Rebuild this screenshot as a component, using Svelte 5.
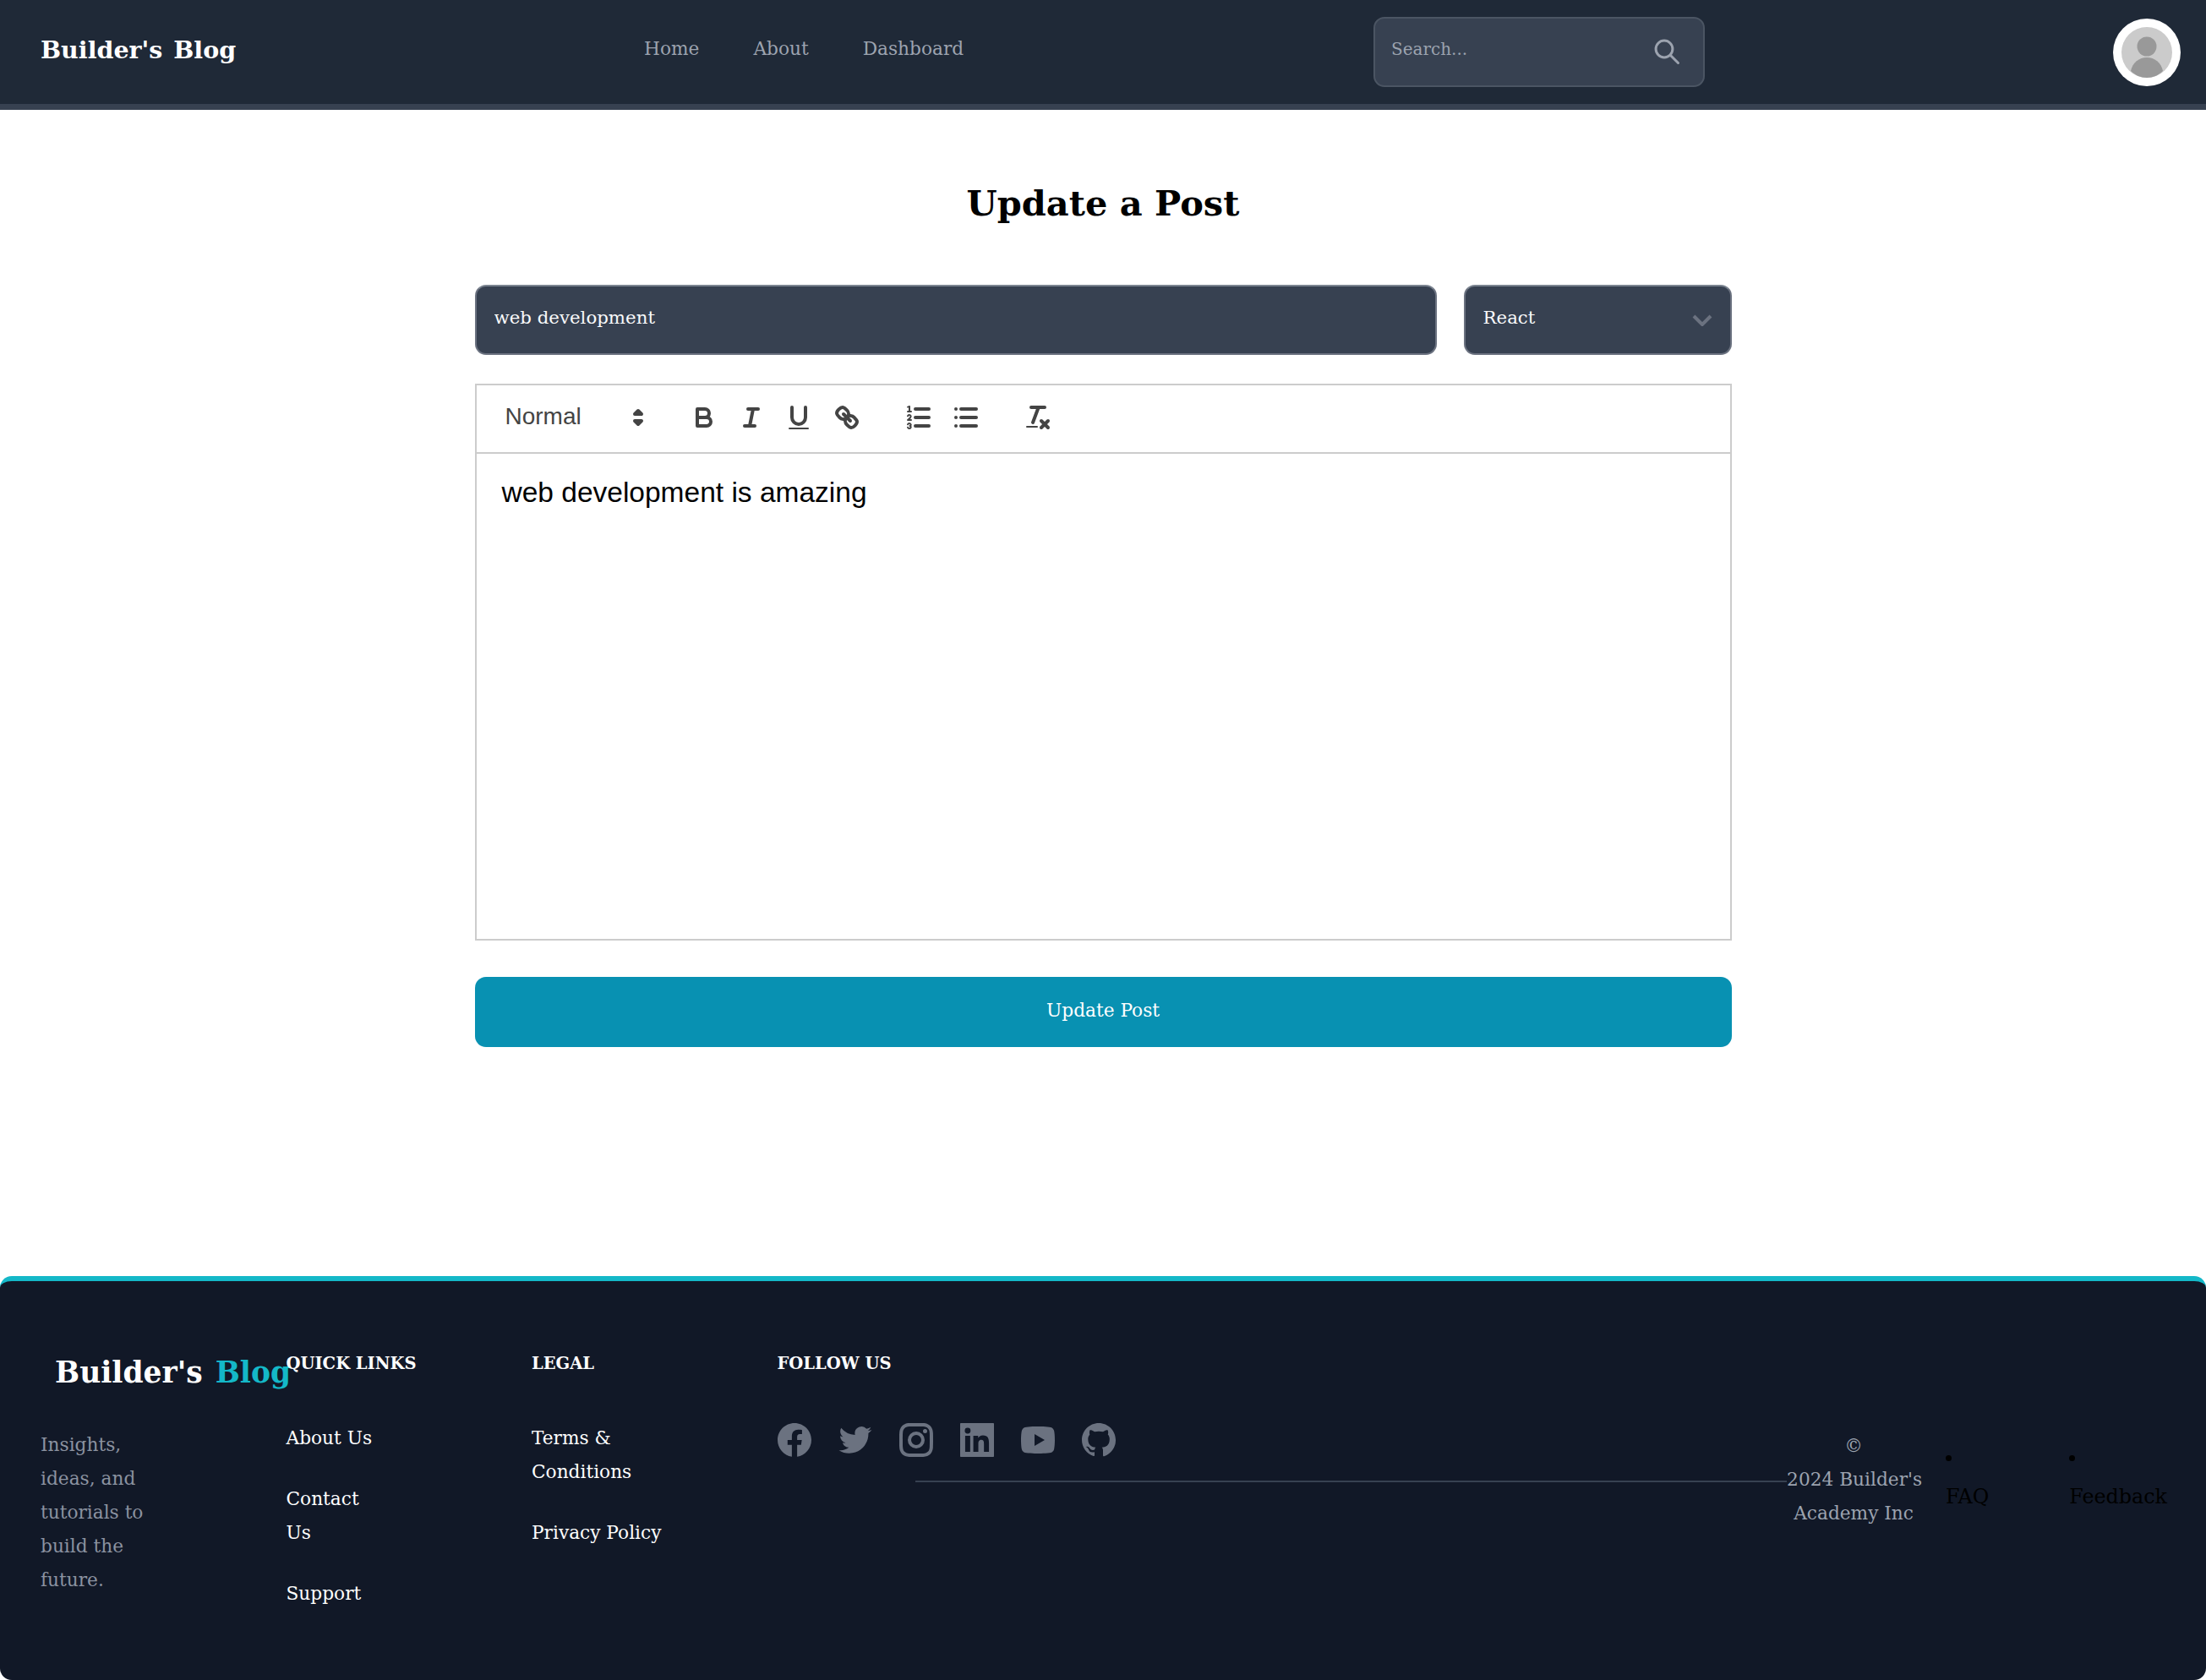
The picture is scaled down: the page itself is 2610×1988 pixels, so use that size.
<script>
  const quick = ['About Us', 'Contact<br>Us', 'Support'];
  const legal = ['Terms &amp;<br>Conditions', 'Privacy Policy'];
</script>

<header class="navbar">
  <a class="logo" href="/">Builder's Blog</a>
  <nav class="links">
    <a href="/">Home</a>
    <a href="/about">About</a>
    <a href="/dashboard">Dashboard</a>
  </nav>
  <div class="search">
    <input type="text" placeholder="Search..." />
    <svg viewBox="0 0 24 24" width="36" height="36" fill="none" stroke="#9ca3af" stroke-width="2" stroke-linecap="round">
      <circle cx="10" cy="10" r="6.6" />
      <line x1="15" y1="15" x2="21" y2="21" />
    </svg>
  </div>
  <div class="avatar">
    <svg viewBox="0 0 60 60" width="60" height="60">
      <circle cx="30" cy="30" r="30" fill="#cbcbcb" />
      <circle cx="30" cy="23" r="11.5" fill="#999" />
      <path d="M11 52c2-10 10-16 19-16s17 6 19 16c-5 5-12 8-19 8s-14-3-19-8z" fill="#999" />
    </svg>
  </div>
</header>

<main>
  <h1>Update a Post</h1>
  <form on:submit|preventDefault>
    <div class="top-row">
      <input class="title-input" type="text" value="web development" />
      <div class="select-wrap">
        <select>
          <option>React</option>
        </select>
        <svg class="chev" viewBox="0 0 24 14" width="24" height="14" fill="none" stroke="#6b7280" stroke-width="4">
          <path d="M2 2l10 10 10-10" />
        </svg>
      </div>
    </div>

    <div class="editor">
      <div class="toolbar">
        <span class="picker">
          <span class="picker-label">Normal</span>
          <svg viewBox="0 0 18 18" class="ic"><polygon class="f s" points="7 11 9 13 11 11 7 11" /><polygon class="f s" points="7 7 9 5 11 7 7 7" /></svg>
        </span>
        <span class="formats">
          <button type="button"><svg viewBox="0 0 18 18" class="ic"><path class="s" d="M5,4H9.5A2.5,2.5,0,0,1,12,6.5v0A2.5,2.5,0,0,1,9.5,9H5A0,0,0,0,1,5,9V4A0,0,0,0,1,5,4Z" /><path class="s" d="M5,9h5.5A2.5,2.5,0,0,1,13,11.5v0A2.5,2.5,0,0,1,10.5,14H5a0,0,0,0,1,0,0V9A0,0,0,0,1,5,9Z" /></svg></button>
          <button type="button"><svg viewBox="0 0 18 18" class="ic"><line class="s" x1="7" x2="13" y1="4" y2="4" /><line class="s" x1="5" x2="11" y1="14" y2="14" /><line class="s" x1="8" x2="10" y1="14" y2="4" /></svg></button>
          <button type="button"><svg viewBox="0 0 18 18" class="ic"><path class="s" d="M5,3V9a4.012,4.012,0,0,0,4,4H9a4.012,4.012,0,0,0,4-4V3" /><rect class="f" height="1" rx="0.5" ry="0.5" width="12" x="3" y="15" /></svg></button>
          <button type="button"><svg viewBox="0 0 18 18" class="ic"><line class="s" x1="7" x2="11" y1="7" y2="11" /><path class="s" d="M8.9,4.577a3.476,3.476,0,0,1,.36,4.679A3.476,3.476,0,0,1,4.577,8.9C3.185,7.5,2.035,6.4,4.217,4.217S7.5,3.185,8.9,4.577Z" /><path class="s" d="M13.423,9.1a3.476,3.476,0,0,0-4.679-.36,3.476,3.476,0,0,0,.36,4.679c1.392,1.392,2.5,2.542,4.679.36S14.815,10.5,13.423,9.1Z" /></svg></button>
        </span>
        <span class="formats">
          <button type="button"><svg viewBox="0 0 18 18" class="ic"><line class="s" x1="7" x2="15" y1="4" y2="4" /><line class="s" x1="7" x2="15" y1="9" y2="9" /><line class="s" x1="7" x2="15" y1="14" y2="14" /><line class="s thin" x1="2.5" x2="4.5" y1="5.5" y2="5.5" /><path class="f" d="M3.5,6A0.5,0.5,0,0,1,3,5.5V3.085l-0.276.138A0.5,0.5,0,0,1,2.053,3c-0.124-.247-0.023-0.324.224-0.447l1-.5A0.5,0.5,0,0,1,4,2.5v3A0.5,0.5,0,0,1,3.5,6Z" /><path class="s thin" d="M4.5,10.5h-2c0-.234,1.85-1.076,1.85-2.234A0.959,0.959,0,0,0,2.5,8.156" /><path class="s thin" d="M2.5,14.846a0.959,0.959,0,0,0,1.85-.109A0.7,0.7,0,0,0,3.75,14a0.688,0.688,0,0,0,.6-0.736,0.959,0.959,0,0,0-1.85-.109" /></svg></button>
          <button type="button"><svg viewBox="0 0 18 18" class="ic"><line class="s" x1="6" x2="15" y1="4" y2="4" /><line class="s" x1="6" x2="15" y1="9" y2="9" /><line class="s" x1="6" x2="15" y1="14" y2="14" /><line class="s" x1="3" x2="3" y1="4" y2="4" /><line class="s" x1="3" x2="3" y1="9" y2="9" /><line class="s" x1="3" x2="3" y1="14" y2="14" /></svg></button>
        </span>
        <span class="formats">
          <button type="button"><svg viewBox="0 0 18 18" class="ic"><line class="s" x1="5" x2="13" y1="3" y2="3" /><line class="s" x1="6" x2="9.35" y1="12" y2="3" /><line class="s" x1="11" x2="15" y1="11" y2="15" /><line class="s" x1="15" x2="11" y1="11" y2="15" /><rect class="f" height="1" rx="0.5" ry="0.5" width="7" x="2" y="14" /></svg></button>
        </span>
      </div>
      <div class="content"><p>web development is amazing</p></div>
    </div>

    <button class="submit" type="submit">Update Post</button>
  </form>
</main>

<footer>
  <div class="col brand">
    <div class="brand-name">Builder's <span>Blog</span></div>
    <p>Insights,<br>ideas, and<br>tutorials to<br>build the<br>future.</p>
  </div>
  <div class="col">
    <h4>Quick Links</h4>
    <ul>
      {#each quick as item}
        <li><a href="/">{@html item}</a></li>
      {/each}
    </ul>
  </div>
  <div class="col">
    <h4>Legal</h4>
    <ul>
      {#each legal as item}
        <li><a href="/">{@html item}</a></li>
      {/each}
    </ul>
  </div>
  <div class="col follow">
    <h4>Follow Us</h4>
    <div class="socials">
      <svg viewBox="2 2 20 20"><path d="M12 2C6.477 2 2 6.477 2 12c0 4.991 3.657 9.128 8.438 9.878v-6.987h-2.54V12h2.54V9.797c0-2.506 1.492-3.89 3.777-3.89 1.094 0 2.238.195 2.238.195v2.46h-1.26c-1.243 0-1.63.771-1.63 1.562V12h2.773l-.443 2.89h-2.33v6.988C18.343 21.128 22 16.991 22 12c0-5.523-4.477-10-10-10z" /></svg>
      <svg viewBox="1.5 1.5 21 21"><path d="M22.162 5.656a8.384 8.384 0 0 1-2.402.658A4.196 4.196 0 0 0 21.6 4c-.82.488-1.719.83-2.656 1.015a4.182 4.182 0 0 0-7.126 3.814 11.874 11.874 0 0 1-8.62-4.37 4.168 4.168 0 0 0-.566 2.103c0 1.45.738 2.731 1.86 3.481a4.168 4.168 0 0 1-1.894-.523v.052a4.185 4.185 0 0 0 3.355 4.101 4.21 4.21 0 0 1-1.89.072A4.185 4.185 0 0 0 7.97 16.65a8.394 8.394 0 0 1-6.191 1.732 11.83 11.83 0 0 0 6.41 1.88c7.693 0 11.9-6.373 11.9-11.9 0-.18-.005-.362-.013-.54a8.496 8.496 0 0 0 2.087-2.165z" /></svg>
      <svg viewBox="2 2 20 20"><path d="M12 9a3 3 0 1 0 0 6 3 3 0 0 0 0-6zm0-2a5 5 0 1 1 0 10 5 5 0 0 1 0-10zm6.5-.25a1.25 1.25 0 0 1-2.5 0 1.25 1.25 0 0 1 2.5 0zM12 4c-2.474 0-2.878.007-4.029.058-.784.037-1.31.142-1.798.332-.434.168-.747.369-1.08.703a2.89 2.89 0 0 0-.704 1.08c-.19.49-.295 1.015-.331 1.798C4.006 9.075 4 9.461 4 12c0 2.474.007 2.878.058 4.029.037.783.142 1.31.331 1.797.17.435.37.748.702 1.08.337.336.65.537 1.08.703.494.191 1.02.297 1.8.333C9.075 19.994 9.461 20 12 20c2.474 0 2.878-.007 4.029-.058.782-.037 1.309-.142 1.797-.331.433-.169.748-.37 1.08-.702.337-.337.538-.65.704-1.08.19-.493.296-1.02.332-1.8.052-1.104.058-1.49.058-4.029 0-2.474-.007-2.878-.058-4.029-.037-.782-.142-1.31-.332-1.798a2.911 2.911 0 0 0-.703-1.08 2.884 2.884 0 0 0-1.08-.704c-.49-.19-1.016-.295-1.798-.331C14.925 4.006 14.539 4 12 4zm0-2c2.717 0 3.056.01 4.122.06 1.065.05 1.79.217 2.428.465.66.254 1.216.598 1.772 1.153a4.908 4.908 0 0 1 1.153 1.772c.247.637.415 1.363.465 2.428.047 1.066.06 1.405.06 4.122 0 2.717-.01 3.056-.06 4.122-.05 1.065-.218 1.79-.465 2.428a4.883 4.883 0 0 1-1.153 1.772 4.915 4.915 0 0 1-1.772 1.153c-.637.247-1.363.415-2.428.465-1.066.047-1.405.06-4.122.06-2.717 0-3.056-.01-4.122-.06-1.065-.05-1.79-.218-2.428-.465a4.89 4.89 0 0 1-1.772-1.153 4.904 4.904 0 0 1-1.153-1.772c-.248-.637-.415-1.363-.465-2.428C2.013 15.056 2 14.717 2 12c0-2.717.01-3.056.06-4.122.05-1.066.217-1.79.465-2.428a4.88 4.88 0 0 1 1.153-1.772A4.897 4.897 0 0 1 5.45 2.525c.638-.248 1.362-.415 2.428-.465C8.944 2.013 9.283 2 12 2z" /></svg>
      <svg viewBox="3 3 18 18"><path d="M18.335 18.339H15.67v-4.177c0-.996-.02-2.278-1.39-2.278-1.389 0-1.601 1.084-1.601 2.205v4.25h-2.666V9.75h2.56v1.17h.035c.358-.674 1.228-1.387 2.528-1.387 2.7 0 3.2 1.778 3.2 4.091v4.715zM7.003 8.575a1.546 1.546 0 0 1-1.548-1.549 1.548 1.548 0 1 1 1.547 1.549zm1.336 9.764H5.666V9.75H8.34v8.589zM20.67 3H3.33C3.15 3 3 3.15 3 3.3v17.4c0 .15.15.3.33.3h17.34c.18 0 .33-.15.33-.3V3.3c0-.15-.15-.3-.33-.3z" /></svg>
      <svg viewBox="2 2 20 20"><path d="M21.543 6.498C22 8.28 22 12 22 12s0 3.72-.457 5.502c-.254.985-.997 1.76-1.938 2.022C17.896 20 12 20 12 20s-5.893 0-7.605-.476c-.945-.266-1.687-1.04-1.938-2.022C2 15.72 2 12 2 12s0-3.72.457-5.502c.254-.985.997-1.76 1.938-2.022C6.107 4 12 4 12 4s5.896 0 7.605.476c.945.266 1.687 1.04 1.938 2.022zM10 15.5l6-3.5-6-3.5v7z" /></svg>
      <svg viewBox="2 2 20 20"><path d="M12 2C6.475 2 2 6.475 2 12a9.994 9.994 0 0 0 6.838 9.488c.5.087.687-.213.687-.476 0-.237-.013-1.024-.013-1.862-2.512.463-3.162-.612-3.362-1.175-.113-.288-.6-1.175-1.025-1.413-.35-.187-.85-.65-.013-.662.788-.013 1.35.725 1.538 1.025.9 1.512 2.338 1.087 2.912.825.088-.65.35-1.087.638-1.337-2.225-.25-4.55-1.113-4.55-4.938 0-1.088.387-1.987 1.025-2.688-.1-.25-.45-1.275.1-2.65 0 0 .837-.262 2.75 1.026a9.28 9.28 0 0 1 2.5-.338c.85 0 1.7.112 2.5.337 1.912-1.3 2.75-1.024 2.75-1.024.55 1.375.2 2.4.1 2.65.637.7 1.025 1.587 1.025 2.687 0 3.838-2.337 4.688-4.562 4.938.362.312.675.912.675 1.85 0 1.337-.013 2.412-.013 2.837 0 .263.188.575.688.475A10.005 10.005 0 0 0 22 12c0-5.525-4.475-10-10-10z" /></svg>
    </div>
  </div>
  <div class="bottom">
    <div class="rule"></div>
    <p class="copy">©<br>2024 Builder's<br>Academy Inc</p>
    <ul class="extra">
      <li><a href="/">FAQ</a></li>
      <li><a href="/">Feedback</a></li>
    </ul>
  </div>
</footer>

<style>
  :global(body) {
    background: #fff;
    font-family: "DejaVu Serif", serif;
  }

  a {
    text-decoration: none;
    color: inherit;
  }

  .navbar {
    display: flex;
    align-items: center;
    height: 123px;
    padding: 0 30px 0 48px;
    background: #1f2937;
    border-bottom: 7px solid #374151;
  }

  .logo {
    width: 714px;
    font-size: 28.5px;
    word-spacing: 3px;
    font-weight: 700;
    color: #fff;
    margin-top: -5px;
  }

  .links {
    display: flex;
    gap: 64px;
    width: 863px;
    font-size: 21.7px;
    color: #9ca3af;
    margin-top: -8px;
  }

  .search {
    position: relative;
    width: 392px;
    height: 83px;
    margin-top: -1px;
  }

  .search input {
    box-sizing: border-box;
    width: 100%;
    height: 100%;
    padding: 0 90px 6px 19px;
    background: #374151;
    border: 2px solid #4b5563;
    border-radius: 13px;
    font-family: inherit;
    font-size: 20px;
    color: #fff;
    outline: none;
  }

  .search input::placeholder {
    color: #9ca3af;
    opacity: 1;
  }

  .search svg {
    position: absolute;
    right: 27px;
    top: 23px;
  }

  .avatar {
    box-sizing: border-box;
    width: 80px;
    height: 80px;
    margin-left: auto;
    padding: 10px;
    background: #fff;
    border-radius: 50%;
    margin-top: 1px;
  }

  .avatar svg {
    display: block;
  }

  main {
    height: 1380px;
  }

  h1 {
    margin: 0;
    padding-top: 81px;
    height: 126px;
    text-align: center;
    font-size: 41.5px;
    font-weight: 700;
    line-height: 60px;
    color: #000;
  }

  form {
    width: 1487px;
    margin: 0 auto;
  }

  .top-row {
    display: flex;
    gap: 32px;
  }

  .title-input,
  select {
    box-sizing: border-box;
    height: 83px;
    padding: 0 21px 6px;
    background: #374151;
    border: 2px solid #6b7280;
    border-top-color: #7b8490;
    border-radius: 13px;
    font-family: inherit;
    font-size: 21.3px;
    color: #f9fafb;
    outline: none;
  }

  .title-input {
    flex: 1;
    min-width: 0;
  }

  .select-wrap {
    position: relative;
    width: 317px;
  }

  select {
    width: 100%;
    appearance: none;
  }

  .chev {
    position: absolute;
    right: 23px;
    top: 35px;
  }

  .editor {
    margin-top: 34px;
    border: 2px solid #ccc;
    height: 659px;
    box-sizing: border-box;
  }

  .toolbar {
    box-sizing: border-box;
    display: flex;
    align-items: center;
    height: 81px;
    padding: 0 0 3px 14px;
    border-bottom: 2px solid #ccc;
    font-family: "Liberation Sans", sans-serif;
  }

  .picker {
    display: flex;
    align-items: center;
    width: 227px;
    padding-left: 20px;
    box-sizing: border-box;
    font-size: 28px;
    color: #444;
  }

  .picker-label {
    width: 139px;
    margin-top: -2px;
  }

  .ic {
    display: block;
    width: 36px;
    height: 36px;
    flex: none;
  }

  .s {
    fill: none;
    stroke: #444;
    stroke-width: 2;
    stroke-linecap: round;
    stroke-linejoin: round;
  }

  .thin {
    stroke-width: 1;
  }

  .f {
    fill: #444;
  }

  .formats {
    display: flex;
    margin-right: 29px;
  }

  .formats button {
    display: flex;
    align-items: center;
    justify-content: center;
    width: 56.3px;
    height: 48px;
    padding: 0;
    background: none;
    border: none;
  }

  .content {
    padding: 22px 30px;
    font-family: "Liberation Sans", sans-serif;
    font-size: 33.5px;
    line-height: 1.42;
    color: #000;
  }

  .content p {
    margin: 0;
  }

  .submit {
    display: block;
    width: 100%;
    height: 83px;
    margin-top: 43px;
    padding-bottom: 6px;
    background: #0891b2;
    border: none;
    border-radius: 13px;
    font-family: inherit;
    font-size: 21.7px;
    color: #fff;
  }

  footer {
    box-sizing: border-box;
    display: flex;
    align-items: flex-start;
    height: 478px;
    padding: 78px 46px 0 48px;
    background: #111827;
    border-top: 6px solid #14b8c8;
    border-radius: 14px;
  }

  .col {
    width: 290.5px;
    flex: none;
  }

  .follow {
    width: 163px;
  }

  .brand-name {
    margin-left: 17px;
    padding-top: 5px;
    white-space: nowrap;
    font-size: 34.5px;
    font-weight: 700;
    line-height: 50px;
    word-spacing: 3px;
    color: #fff;
  }

  .brand-name span {
    color: #14b8c8;
  }

  .brand p {
    margin: 41px 0 0;
    font-size: 21.7px;
    line-height: 40px;
    color: #8b92a0;
  }

  h4 {
    margin: 0;
    font-size: 19.5px;
    font-weight: 700;
    line-height: 40px;
    text-transform: uppercase;
    color: #fff;
  }

  .col ul {
    list-style: none;
    margin: 48px 0 0;
    padding: 0;
    display: flex;
    flex-direction: column;
    gap: 32px;
    font-size: 21.7px;
    line-height: 40px;
    color: #fff;
  }

  .socials {
    display: flex;
    gap: 32px;
    margin-top: 50px;
  }

  .socials svg {
    flex: none;
    width: 40px;
    height: 40px;
    fill: #6b7280;
  }

  .bottom {
    flex: 1;
    display: flex;
    align-items: center;
    height: 120px;
    margin-top: 97px;
  }

  .rule {
    flex: 1;
    height: 2px;
    margin-top: 3px;
    background: #374151;
  }

  .copy {
    width: 158px;
    margin: 0;
    text-align: center;
    white-space: nowrap;
    font-size: 21.7px;
    line-height: 40px;
    color: #9ca3af;
  }

  .extra {
    display: flex;
    gap: 95px;
    margin: 0 0 6px 30px;
    padding: 0;
    list-style: disc inside;
    font-size: 23.8px;
    line-height: 47px;
    color: #000;
  }

  .extra a {
    display: block;
  }
</style>
